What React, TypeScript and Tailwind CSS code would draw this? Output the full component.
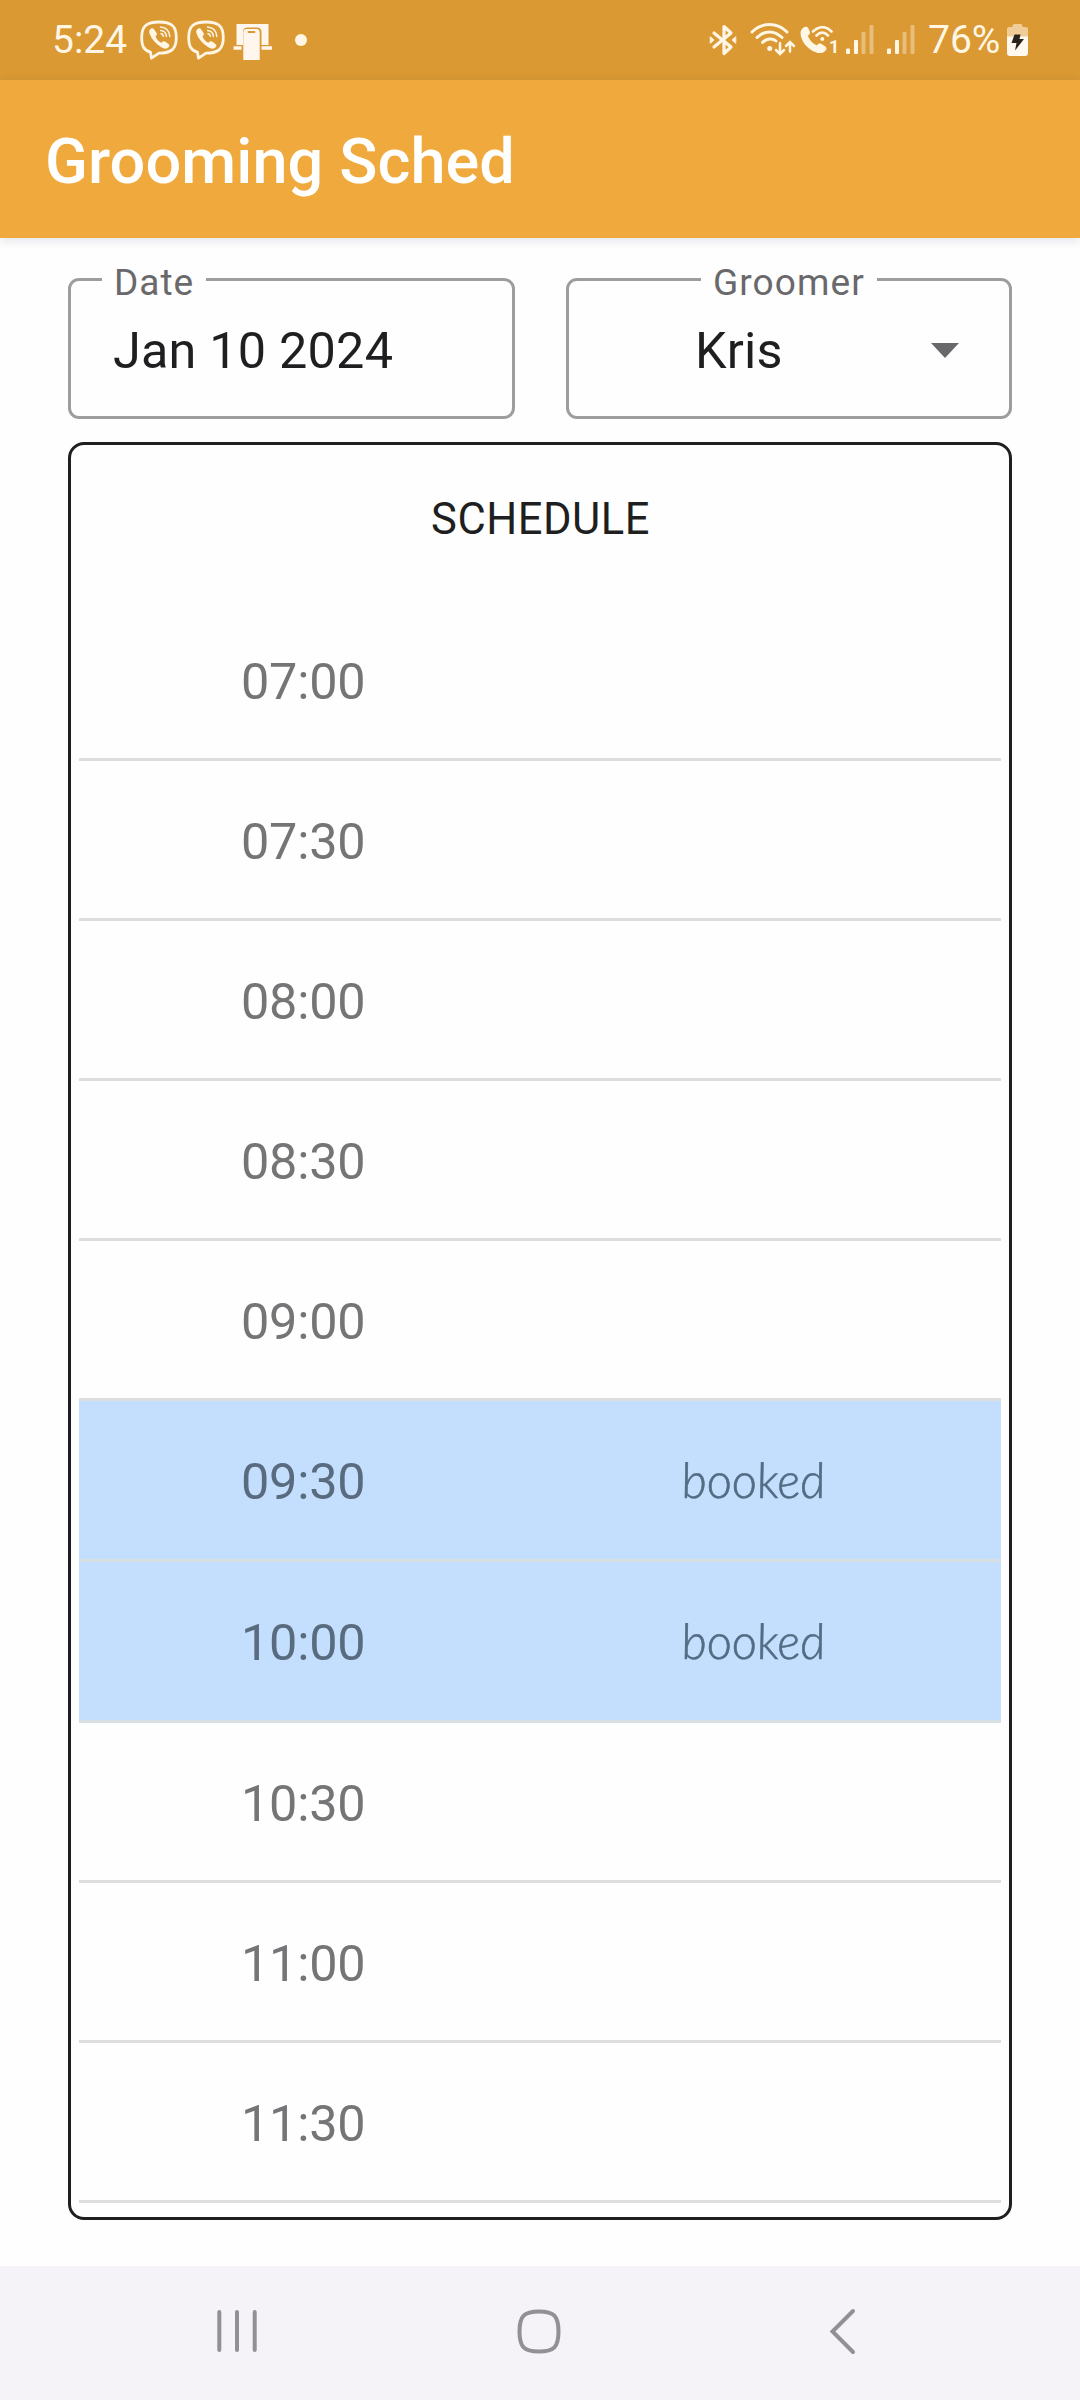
import React from "react";

const slots = [
  { time: "07:00", booked: false },
  { time: "07:30", booked: false },
  { time: "08:00", booked: false },
  { time: "08:30", booked: false },
  { time: "09:00", booked: false },
  { time: "09:30", booked: true },
  { time: "10:00", booked: true },
  { time: "10:30", booked: false },
  { time: "11:00", booked: false },
  { time: "11:30", booked: false },
];

const ViberIcon = () => (
  <svg width="38" height="40" viewBox="0 0 38 40" fill="none" stroke="#fff6e6">
    <path
      d="M10.500 32.200C4 30.500 1.700 26.500 1.700 17.500C1.700 6 6.500 2 19 2S36.300 6 36.300 17.500S31.500 33 19 33.200L11.500 38.200Z"
      strokeWidth="2.800"
      strokeLinejoin="round"
    />
    <path
      d="M10 9.500c1.500-1.800 3-1.800 4.200 0l2.300 3.300c.8 1.400.3 2.500-1 3.600c1.200 3 3 5 6 6.300c1.200-1.600 2.500-1.900 4-1l3 2.200c1.500 1.200 1 2.600-.8 4.100c-2 1.400-4 .5-6.700-1C15.500 23.500 11.500 19 9.500 13.500c-.5-1.800-.4-3 .5-4Z"
      fill="#fff6e6"
      stroke="none"
    />
    <path d="M20.500 7c5.500.5 9 4 9.300 9.500M20.700 10.500c3.300.3 5.500 2.500 5.700 6M21 13.800c1.400.2 2.200 1 2.300 2.500" strokeWidth="1.500" strokeLinecap="round" />
  </svg>
);

const DevicesIcon = () => (
  <svg width="40" height="38" viewBox="0 0 40 38" fill="#fff6ee">
    <path d="M3.500 1h32v21h-7V9c0-3-1.500-4.500-4.500-4.500h-9.500c-3 0-4.500 1.500-4.500 4.500v13h-6.500zM.5 23.300h8v3.500h-8zM28.500 23.300h10.500v3.500H28.500z" />
    <path d="M10.300 9.500c0-2.200 1-3.500 3.200-3.500h10c2.200 0 3.200 1.300 3.200 3.500V37H10.300z" />
    <path d="M15.500 9h6" stroke="#da9932" strokeWidth="1.800" strokeLinecap="round" />
  </svg>
);

const BluetoothIcon = () => (
  <svg width="28" height="32" viewBox="0 0 28 32" fill="none" stroke="#fff6e6" strokeWidth="3.200" strokeLinejoin="round" strokeLinecap="round">
    <path d="M5 9L22 23L15 29.500V2.500L22 9L5 23" />
    <path d="M1.500 13l3.500 3l-3.500 3zM26.500 13l-3.500 3l3.500 3z" fill="#fff6e6" strokeWidth="1" />
  </svg>
);

const WifiIcon = () => (
  <svg width="46" height="34" viewBox="0 0 46 34" fill="none" stroke="#fff6e6" strokeWidth="3" strokeLinecap="round">
    <path d="M2 10C12 .1 27 .1 37 10M7 15.500c7.500-7.500 17.500-7.500 25 0M12.500 20.500c4-4.300 10-4.600 13.500-1.500" />
    <circle cx="19.700" cy="26.500" r="2.500" fill="#fff6e6" stroke="none" />
    <path d="M30 21v10.500M26 28l4 4l4-4M40 29.500V20.500M36 24l4-4l4 4" strokeWidth="2.500" />
  </svg>
);

const WifiCallIcon = () => (
  <svg width="37" height="30" viewBox="0 0 37 30" fill="none" stroke="#fff6e6" strokeLinecap="round">
    <path
      d="M3 2c2-1.600 4-1.600 5.300.2l1.500 3.300c.5 1.600 0 2.600-2 4.500c2 4.500 5 7.500 9 9.500c1.600-2 3-2.400 4.800-1.500l3.800 2.500c1.500 1.200 1.500 2.500.2 4c-2.600 3-6 3.300-10.600 1.400C7.500 23 1.500 16 .6 8.500C.3 5.500 1 3.500 3 2Z"
      fill="#fff6e6"
      stroke="none"
    />
    <path d="M13 5.500c6-5.800 13-5.800 18.500 0M16.500 9.500c3.700-3.500 8-3.500 11.500 0" strokeWidth="2.600" />
    <circle cx="22.300" cy="13" r="2" fill="#fff6e6" stroke="none" />
  </svg>
);

const SignalIcon = () => (
  <svg width="28" height="29" viewBox="0 0 28 29" fill="#fff6e6">
    <rect x="0" y="23.500" width="4" height="5.500" rx="1" />
    <rect x="8" y="15" width="4" height="14" rx="1" />
    <rect x="15.500" y="7" width="4" height="22" rx="1" opacity=".4" />
    <rect x="23.500" y="0" width="4" height="29" rx="1" opacity=".4" />
  </svg>
);

const BatteryIcon = () => (
  <svg width="21" height="32" viewBox="0 0 21 32">
    <path d="M5.500 3V2c0-1.200.6-2 2-2h6c1.400 0 2 .8 2 2v1H19c1.400 0 2 1 2 2v8H0V5c0-1 .6-2 2-2z" fill="#f0cd98" />
    <path d="M0 12.500h21V29c0 2-1 3-3 3H3c-2 0-3-1-3-3z" fill="#fff9f0" />
    <path d="M7.500 10.500h6l-1 4.500H17L8 26.500l1.500-7.500H4.500z" fill="#2a231c" />
  </svg>
);

const StatusBar = () => (
  <div className="flex h-20 items-start bg-[#da9932] text-[39px] leading-[46px] text-[#fff6e6]">
    <span className="ml-[52px] w-[88px] pt-[17px]">5:24</span>
    <div className="flex gap-[9px] pt-5">
      <ViberIcon />
      <ViberIcon />
    </div>
    <div className="ml-2 pt-[23px]">
      <DevicesIcon />
    </div>
    <span className="mt-[34px] ml-[22px] size-3 rounded-full bg-[#fff6e6]" />
    <div className="ml-auto flex">
      <div className="mt-6 w-[41px]">
        <BluetoothIcon />
      </div>
      <div className="mt-[22px] w-[50px]">
        <WifiIcon />
      </div>
      <div className="mt-[26px] flex w-[46px]">
        <WifiCallIcon />
        <span className="-ml-2 mt-[9px] text-[18px] font-bold leading-[24px]">1</span>
      </div>
      <div className="mt-[25px] flex gap-[13px]">
        <SignalIcon />
        <SignalIcon />
      </div>
      <span className="ml-[13px] w-[79px] pt-[17px]">76%</span>
      <div className="mt-6 mr-[52px]">
        <BatteryIcon />
      </div>
    </div>
  </div>
);

const ScheduleRow = ({ time, booked }: { time: string; booked: boolean }) => (
  <li
    className={
      booked
        ? "flex h-[161px] items-center border-b-[3px] border-[#d7dfe3] bg-[#c4dffd] text-[#596b7e]"
        : "flex h-40 items-center border-b-[3px] border-[#dddde0] text-[#757578]"
    }
  >
    <span className="w-1/2 pt-1 pl-[162px] text-[50.4px] tracking-[-0.2px]">{time}</span>
    {booked && (
      <span className="ml-[141px] skew-x-[6deg] font-['Lato',sans-serif] text-[49px] font-light italic text-[#536c84] [-webkit-text-stroke:0.6px_currentColor]">
        booked
      </span>
    )}
  </li>
);

const NavBar = () => (
  <nav className="flex h-[134px] bg-[#f5f3f7] text-[#919094]">
    <svg width="1080" height="134" viewBox="0 0 1080 134" fill="none" stroke="currentColor" strokeWidth="4" strokeLinecap="round">
      <path d="M219.300 46v38M237 46v38M254.700 46v38" />
      <path d="M539 45.500c15 0 19.500 4.500 19.500 20s-4.500 20-19.500 20s-19.500-4.500-19.500-20s4.500-20 19.500-20z" />
      <path d="M853 45L832.500 65.500L853 86" />
    </svg>
  </nav>
);

export default function App() {
  return (
    <div className="flex h-[2400px] w-[1080px] flex-col bg-[#fefefe] font-['Roboto',sans-serif] text-[#1f1f22]">
      <StatusBar />
      <header className="flex h-[158px] items-center bg-[#efa93c] pt-[6px] pl-[45px] shadow-[0_2px_10px_rgba(40,40,90,0.14)]">
        <h1 className="text-[63px] font-medium tracking-[0.1px] text-white">Grooming Sched</h1>
      </header>

      <main className="flex flex-1 flex-col px-[68px] pt-10">
        <div className="flex gap-[51px]">
          <div className="relative flex h-[141px] w-[447px] items-center rounded-[11px] border-[3px] border-[#9d9c9f] pt-1 pl-[42px]">
            <span className="absolute top-[-19px] left-[31px] bg-[#fefefe] px-3 text-[37px] leading-[42px] tracking-[1px] text-[#69686b]">
              Date
            </span>
            <span className="text-[50.4px] tracking-[0.2px]">Jan 10 2024</span>
          </div>
          <div className="relative flex h-[141px] w-[446px] items-center rounded-[11px] border-[3px] border-[#9d9c9f] pt-1 pl-[126px]">
            <span className="absolute top-[-19px] left-[132px] bg-[#fefefe] px-3 text-[37px] leading-[42px] tracking-[1.1px] text-[#69686b]">
              Groomer
            </span>
            <span className="text-[50.4px] tracking-[0.2px]">Kris</span>
            <svg className="ml-auto mr-[50px]" width="28" height="15" viewBox="0 0 28 15" fill="#69686b">
              <path d="M0 0h28L14 15z" />
            </svg>
          </div>
        </div>

        <section className="mt-[23px] h-[1778px] rounded-[16px] border-[3px] border-[#1f1f22] px-2">
          <h2 className="flex h-[156px] items-center justify-center pb-[7px] pl-px text-[43.5px] tracking-[0.5px]">
            SCHEDULE
          </h2>
          <ul>
            {slots.map((slot) => (
              <ScheduleRow key={slot.time} time={slot.time} booked={slot.booked} />
            ))}
          </ul>
        </section>
      </main>

      <NavBar />
    </div>
  );
}
